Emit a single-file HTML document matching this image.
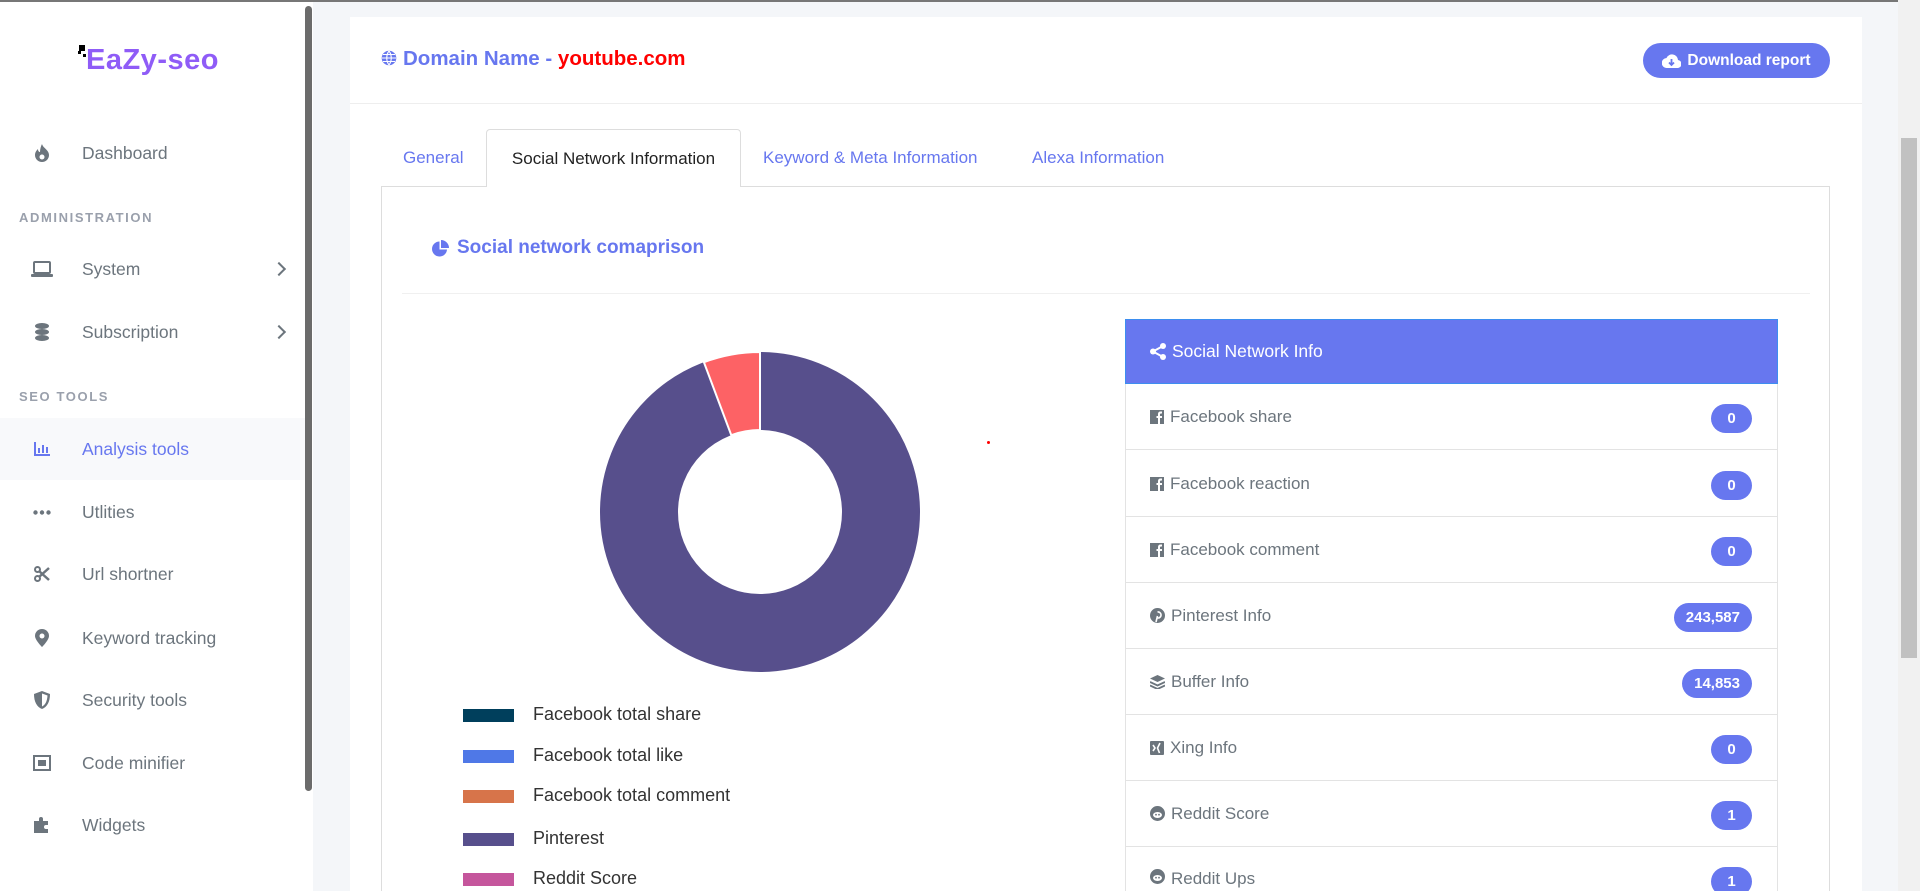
<!DOCTYPE html>
<html style="overflow:hidden;height:891px"><head><meta charset="utf-8"><style>
*{margin:0;padding:0;box-sizing:border-box}
body{width:1920px;height:891px;overflow:hidden;background:#f4f6f9;font-family:"Liberation Sans",sans-serif;position:relative}
.a{position:absolute}
#top{left:0;top:0;width:1920px;height:2px;background:#777}
#side{left:0;top:2px;width:313px;height:889px;background:#fff}
#sbar{left:305px;top:6px;width:7px;height:785px;background:#6b6b6b;border-radius:4px}
.logo{left:86px;top:44px;font-size:29px;font-weight:bold;color:#8f5cf7;letter-spacing:0.5px}
.it{left:0;width:305px;height:62px;display:flex;align-items:center;font-size:17.5px;color:#6c757d}
.it .ic{width:82px;display:flex;justify-content:center;padding-left:2px}
.it .ch{position:absolute;left:274px;top:26px;width:10px;height:10px;border-right:2.5px solid #6c757d;border-top:2.5px solid #6c757d;transform:rotate(45deg)}
.hd{left:19px;font-size:13px;letter-spacing:1.6px;color:#9aa0ac;font-weight:bold}
#card{left:350px;top:17px;width:1512px;height:874px;background:#fff}
#card .hb{left:0;top:86px;width:1512px;height:1px;background:#eee}
.dn{left:381px;top:47px;font-size:20.5px;font-weight:bold;color:#6777ef}
.btn{left:1643px;top:43px;width:187px;height:35px;border-radius:18px;background:#6777ef;color:#fff;font-size:15.5px;font-weight:bold;display:flex;align-items:center;justify-content:center;gap:6px}
.tab{top:130px;height:56px;font-size:17px;color:#6777ef;display:flex;align-items:center}
#tline{left:381px;top:186px;width:1449px;height:1px;background:#ddd}
#act{left:486px;top:129px;width:255px;height:58px;border:1px solid #ddd;border-bottom:none;border-radius:4px 4px 0 0;background:#fff;color:#222;justify-content:center}
#pane{left:381px;top:186px;width:1449px;height:705px;border-left:1px solid #ddd;border-right:1px solid #ddd}
.st{left:432px;top:237px;font-size:19px;font-weight:bold;color:#6777ef;display:flex;align-items:center;gap:8px}
#div{left:402px;top:293px;width:1408px;height:1px;background:#f0f0f0}
.lg{left:463px;width:51px;height:13px}
.lt{left:533px;font-size:18px;color:#333}
#sn{left:1125px;top:319px;width:653px;height:572px;border-left:1px solid #e3e3e3;border-right:1px solid #e3e3e3}
#snh{left:1125px;top:319px;width:653px;height:65px;background:#6777ef;border:1px solid #3d8ef0;color:#fff;font-size:17.5px;display:flex;align-items:center;padding-left:24px;gap:6px}
.row{left:1125px;width:653px;height:66px;border-bottom:1px solid #e3e3e3;display:flex;align-items:center;padding-left:25px;font-size:17px;color:#6c757d;gap:6px}
.bd{position:absolute;right:26px;top:20px;height:29px;min-width:41px;padding:0 12px;border-radius:15px;background:#6777ef;color:#fff;font-weight:bold;font-size:15px;display:flex;align-items:center;justify-content:center}
#vs{left:1898px;top:0;width:22px;height:891px;background:#f1f1f1}
#vt{left:1901px;top:138px;width:16px;height:520px;background:#c1c1c1}
</style></head><body>
<div class="a" id="side"></div>
<div class="a" id="top"></div>
<div class="a" id="sbar"></div>
<div class="a" style="left:79px;top:45px;width:6px;height:6px;background:#000"></div>
<div class="a" style="left:78px;top:51px;width:3px;height:3px;background:#000"></div>
<div class="a" style="left:83px;top:54px;width:3px;height:3px;background:#000"></div>
<div class="a logo">EaZy-seo</div>

<div class="a it" style="top:122px"><span class="ic"><svg width="16" height="18" viewBox="0 0 16 18"><path d="M8 0C9 4 15 6 15 11a7 7 0 0 1-14 0c0-3 2-5 3-6 0 2 1 3 2 3C6 5 7 2 8 0z" fill="#6c757d"/><circle cx="8" cy="13" r="2.5" fill="#fff"/></svg></span>Dashboard</div>
<div class="a hd" style="top:210px">ADMINISTRATION</div>
<div class="a it" style="top:238px"><span class="ic"><svg width="22" height="16" viewBox="0 0 22 16"><rect x="3" y="1" width="16" height="11" rx="1" fill="none" stroke="#6c757d" stroke-width="2"/><rect x="0" y="13" width="22" height="3" rx="1" fill="#6c757d"/></svg></span>System<span class="ch"></span></div>
<div class="a it" style="top:301px"><span class="ic"><svg width="16" height="18" viewBox="0 0 16 18"><ellipse cx="8" cy="3" rx="7" ry="3" fill="#6c757d"/><ellipse cx="8" cy="9" rx="7" ry="3" fill="#6c757d"/><ellipse cx="8" cy="15" rx="7" ry="3" fill="#6c757d"/></svg></span>Subscription<span class="ch"></span></div>
<div class="a hd" style="top:389px">SEO TOOLS</div>
<div class="a" style="left:0;top:418px;width:305px;height:62px;background:#f8f9fb"></div>
<div class="a it" style="top:418px;color:#6777ef"><span class="ic"><svg width="16" height="14" viewBox="0 0 16 14"><path d="M1 0v13h15" fill="none" stroke="#6777ef" stroke-width="2"/><rect x="4" y="6" width="2" height="5" fill="#6777ef"/><rect x="8" y="3" width="2" height="8" fill="#6777ef"/><rect x="12" y="5" width="2" height="6" fill="#6777ef"/></svg></span>Analysis tools</div>
<div class="a it" style="top:481px"><span class="ic"><svg width="18" height="5"><circle cx="2.5" cy="2.5" r="2.2" fill="#6c757d"/><circle cx="9" cy="2.5" r="2.2" fill="#6c757d"/><circle cx="15.5" cy="2.5" r="2.2" fill="#6c757d"/></svg></span>Utlities</div>
<div class="a it" style="top:543px"><span class="ic"><svg width="16" height="16" viewBox="0 0 16 16"><circle cx="3.5" cy="3.5" r="2.5" fill="none" stroke="#6c757d" stroke-width="2"/><circle cx="3.5" cy="12.5" r="2.5" fill="none" stroke="#6c757d" stroke-width="2"/><path d="M5 5l10 9M5 11L15 2" stroke="#6c757d" stroke-width="2.5"/></svg></span>Url shortner</div>
<div class="a it" style="top:607px"><span class="ic"><svg width="14" height="18" viewBox="0 0 14 18"><path d="M7 0a7 7 0 0 1 7 7c0 4-7 11-7 11S0 11 0 7a7 7 0 0 1 7-7z" fill="#6c757d"/><circle cx="7" cy="7" r="2.5" fill="#fff"/></svg></span>Keyword tracking</div>
<div class="a it" style="top:669px"><span class="ic"><svg width="16" height="18" viewBox="0 0 16 18"><path d="M8 0l8 3c0 8-3 13-8 15C3 16 0 11 0 3z" fill="#6c757d"/><path d="M8 2.5l5.5 2c-.3 6-2.5 9.5-5.5 11z" fill="#fff"/></svg></span>Security tools</div>
<div class="a it" style="top:732px"><span class="ic"><svg width="18" height="16" viewBox="0 0 18 16"><rect x="1" y="1" width="16" height="14" fill="none" stroke="#6c757d" stroke-width="2"/><rect x="5" y="5" width="8" height="6" fill="#6c757d"/></svg></span>Code minifier</div>
<div class="a it" style="top:794px"><span class="ic"><svg width="16" height="16" viewBox="0 0 16 16"><path d="M0 4h5V2a2 2 0 0 1 4 0v2h5v4h-2a2 2 0 0 0 0 4h2v4H0z" fill="#6c757d"/></svg></span>Widgets</div>

<div class="a" id="card"><div class="a hb"></div></div>
<div class="a dn"><svg width="16" height="16" viewBox="0 0 16 16" style="vertical-align:-1px;margin-right:6px"><circle cx="8" cy="8" r="7.3" fill="#6777ef"/><path d="M1 8h14M8 1c-3 4-3 10 0 14M8 1c3 4 3 10 0 14M2 4.5h12M2 11.5h12" stroke="#fff" stroke-width="1.1" fill="none"/></svg>Domain Name - <span style="color:#f00">youtube.com</span></div>
<div class="a btn"><svg width="19" height="14" viewBox="0 0 19 14"><path d="M5 14a5 5 0 0 1-.5-10A6 6 0 0 1 16 6a4 4 0 0 1-1 8z" fill="#fff"/><path d="M9.5 5v6M7 8.5l2.5 2.5 2.5-2.5" stroke="#6777ef" stroke-width="1.8" fill="none"/></svg>Download report</div>

<div class="a" id="tline"></div>
<div class="a" id="pane"></div>
<div class="a tab" style="left:403px">General</div>
<div class="a tab" id="act">Social Network Information</div>
<div class="a tab" style="left:763px">Keyword &amp; Meta Information</div>
<div class="a tab" style="left:1032px">Alexa Information</div>

<div class="a st"><svg width="17" height="17" viewBox="0 0 17 17"><path d="M7.5 1.5A7.5 7.5 0 1 0 15 9.5H7.5z" fill="#6777ef"/><path d="M9 0a8 8 0 0 1 8 8H9z" fill="#6777ef"/></svg>Social network comaprison</div>
<div class="a" id="div"></div>

<svg class="a" style="left:590px;top:342px" width="340" height="340" viewBox="-170 -170 340 340">
<circle r="121" fill="none" stroke="#574f8c" stroke-width="78"/>
<path d="M0-160A160 160 0 0 0 -56.1-149.8L-28.7-76.8A82 82 0 0 1 0-82z" fill="#fd6265" stroke="#fff" stroke-width="2"/>
<path d="M0-160V-82" stroke="#fff" stroke-width="2"/>
</svg>
<div class="a" style="left:987px;top:441px;width:3px;height:3px;border-radius:50%;background:#f00"></div>

<div class="a lg" style="top:709px;background:#003f5c"></div><div class="a lt" style="top:704px">Facebook total share</div>
<div class="a lg" style="top:750px;background:#4f78e7"></div><div class="a lt" style="top:745px">Facebook total like</div>
<div class="a lg" style="top:790px;background:#d7744a"></div><div class="a lt" style="top:785px">Facebook total comment</div>
<div class="a lg" style="top:833px;background:#574f8c"></div><div class="a lt" style="top:828px">Pinterest</div>
<div class="a lg" style="top:873px;background:#c5569c"></div><div class="a lt" style="top:868px">Reddit Score</div>

<div class="a" id="sn"></div>
<div class="a" id="snh"><svg width="16" height="17" viewBox="0 0 16 17"><circle cx="13" cy="3" r="3" fill="#fff"/><circle cx="13" cy="14" r="3" fill="#fff"/><circle cx="3" cy="8.5" r="3" fill="#fff"/><path d="M13 3L3 8.5 13 14" stroke="#fff" stroke-width="2" fill="none"/></svg>Social Network Info</div>
<div class="a row" style="top:384px"><svg width="14" height="14"><rect width="14" height="14" fill="#6c757d"/><path d="M10 14V8h2V6h-2V4.5c0-.6.3-1 1-1h1V1.5H10.5C8.8 1.5 8 2.5 8 4v2H6.5v2H8v6" fill="#fff"/></svg>Facebook share<span class="bd">0</span></div>
<div class="a row" style="top:451px"><svg width="14" height="14"><rect width="14" height="14" fill="#6c757d"/><path d="M10 14V8h2V6h-2V4.5c0-.6.3-1 1-1h1V1.5H10.5C8.8 1.5 8 2.5 8 4v2H6.5v2H8v6" fill="#fff"/></svg>Facebook reaction<span class="bd">0</span></div>
<div class="a row" style="top:517px"><svg width="14" height="14"><rect width="14" height="14" fill="#6c757d"/><path d="M10 14V8h2V6h-2V4.5c0-.6.3-1 1-1h1V1.5H10.5C8.8 1.5 8 2.5 8 4v2H6.5v2H8v6" fill="#fff"/></svg>Facebook comment<span class="bd">0</span></div>
<div class="a row" style="top:583px"><svg width="15" height="15"><circle cx="7.5" cy="7.5" r="7.5" fill="#6c757d"/><path d="M6 14l1.5-6M7.5 4a3 3 0 0 1 1 6c-1 0-1.5-.5-1.5-.5" stroke="#fff" stroke-width="1.6" fill="none"/></svg>Pinterest Info<span class="bd">243,587</span></div>
<div class="a row" style="top:649px"><svg width="15" height="14"><path d="M7.5 0L15 3.5 7.5 7 0 3.5z" fill="#6c757d"/><path d="M0 7l7.5 3.5L15 7M0 10.5L7.5 14 15 10.5" stroke="#6c757d" stroke-width="1.8" fill="none"/></svg>Buffer Info<span class="bd">14,853</span></div>
<div class="a row" style="top:715px"><svg width="14" height="14"><rect width="14" height="14" rx="1" fill="#6c757d"/><path d="M3 4l2 3-2 3M10 2L7.5 7l2 5" stroke="#fff" stroke-width="1.6" fill="none"/></svg>Xing Info<span class="bd">0</span></div>
<div class="a row" style="top:781px"><svg width="15" height="15"><circle cx="7.5" cy="7.5" r="7.5" fill="#6c757d"/><ellipse cx="7.5" cy="9" rx="4.5" ry="3" fill="#fff"/><circle cx="6" cy="8.7" r=".9" fill="#6c757d"/><circle cx="9" cy="8.7" r=".9" fill="#6c757d"/></svg>Reddit Score<span class="bd">1</span></div>
<div class="a row" style="top:847px;height:44px;border-bottom:none;align-items:flex-start;padding-top:22px"><svg width="15" height="15"><circle cx="7.5" cy="7.5" r="7.5" fill="#6c757d"/><ellipse cx="7.5" cy="9" rx="4.5" ry="3" fill="#fff"/><circle cx="6" cy="8.7" r=".9" fill="#6c757d"/><circle cx="9" cy="8.7" r=".9" fill="#6c757d"/></svg>Reddit Ups<span class="bd">1</span></div>

<div class="a" id="vs"></div>
<div class="a" id="vt"></div>
</body></html>
